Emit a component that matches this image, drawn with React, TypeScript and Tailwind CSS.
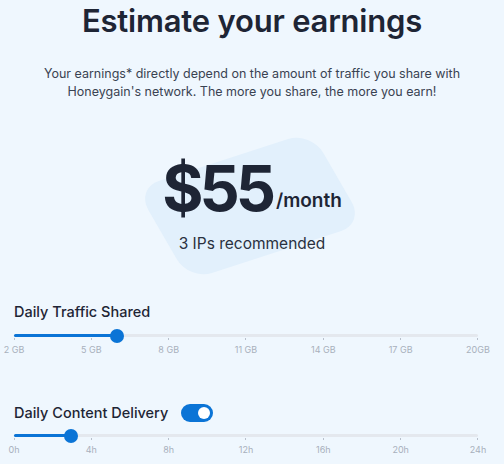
const traffic = ["2 GB", "5 GB", "8 GB", "11 GB", "14 GB", "17 GB", "20GB"];
const hours = ["0h", "4h", "8h", "12h", "16h", "20h", "24h"];

const Slider = ({ labels, value }: { labels: string[]; value: number }) => (
  <div className="mx-[14px] w-[464px]">
    <div className="relative h-[3px] rounded-full bg-[#e4e8ee]">
      <div className="absolute left-0 top-0 h-[3px] rounded-full bg-[#0b74d6]" style={{ width: `${value}%` }} />
      <div
        className="absolute top-1/2 h-[14px] w-[14px] -translate-x-1/2 -translate-y-1/2 rounded-full bg-[#0b74d6]"
        style={{ left: `${value}%` }}
      />
    </div>
    <div className="mt-[1px] flex justify-between">
      {labels.map((l) => (
        <div key={l} className="flex w-0 flex-col items-center">
          <div className="h-[2px] w-px bg-[#b8c0cc]" />
          <span className="mt-[4px] whitespace-nowrap text-[9px] leading-[12px] text-[#a8b0bc]">{l}</span>
        </div>
      ))}
    </div>
  </div>
);

const App = () => (
  <div className="h-[464px] w-[504px] overflow-hidden bg-[#eff7fe] font-['Inter',sans-serif] text-[#1e2535]">
    <h1 className="pt-[3px] text-center text-[31px] font-semibold leading-[36px] tracking-[-0.2px]">
      Estimate your earnings
    </h1>
    <p className="mx-auto mt-[26px] w-[440px] text-center text-[12.5px] leading-[18px] text-[#3a4352]">
      Your earnings* directly depend on the amount of traffic you share with Honeygain's network. The more you share, the more you earn!
    </p>
    <div className="relative mt-[51px] flex h-[124px] flex-col items-center">
      <div className="absolute left-[158px] top-[2px] h-[104px] w-[184px] -rotate-[18deg] skew-x-[12deg] rounded-[24px] bg-[#e2f0fc]" />
      <div className="relative flex items-end">
        <span className="text-[63px] font-bold leading-[72px] tracking-[-4px]">$55</span>
        <span className="mb-[11px] ml-[4px] text-[19px] font-semibold leading-[24px]">/month</span>
      </div>
      <div className="relative mt-[10px] text-[15.5px] leading-[20px] text-[#2a3140]">3 IPs recommended</div>
    </div>
    <div className="mt-[26px] px-[14px] text-[14.5px] font-medium leading-[20px]">Daily Traffic Shared</div>
    <div className="mt-[12px]">
      <Slider labels={traffic} value={22.2} />
    </div>
    <div className="mt-[47px] flex items-center px-[14px]">
      <span className="text-[14.5px] font-medium leading-[20px]">Daily Content Delivery</span>
      <div className="ml-[13px] flex h-[18px] w-[32px] items-center justify-end rounded-full bg-[#0b74d6] px-[3px]">
        <div className="h-[12px] w-[12px] rounded-full bg-white" />
      </div>
    </div>
    <div className="mt-[11px]">
      <Slider labels={hours} value={12.3} />
    </div>
  </div>
);

export default App;
